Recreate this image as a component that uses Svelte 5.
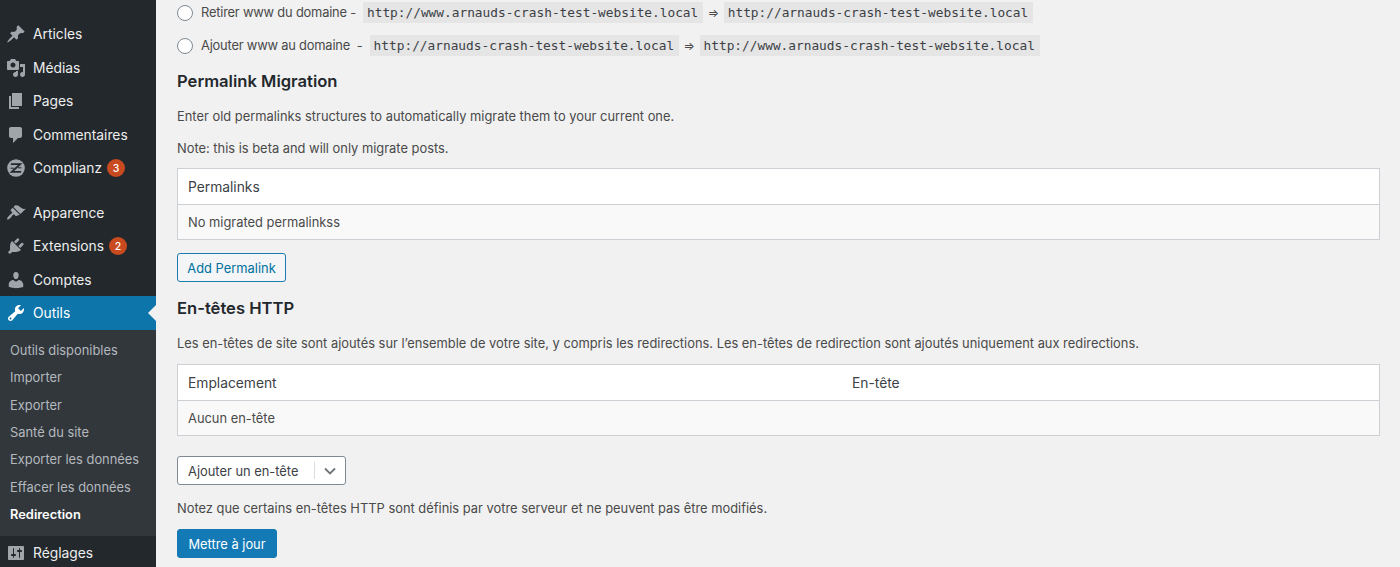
<script>
    const icons = {
        post: "M10.44 3.02l1.82-1.82 6.36 6.35-1.83 1.82c-1.05-.68-2.48-.57-3.41.36l-.75.75c-.92.93-1.04 2.35-.35 3.41l-1.83 1.82-2.41-2.41-2.8 2.79c-.42.42-3.38 2.71-3.8 2.29s1.86-3.39 2.28-3.81l2.79-2.79L4.1 9.36l1.83-1.82c1.05.69 2.48.57 3.4-.36l.75-.75c.93-.92 1.05-2.35.36-3.41z",
        media: "M13 11V4c0-.55-.45-1-1-1h-1.67L9 1H5L3.67 3H2c-.55 0-1 .45-1 1v7c0 .55.45 1 1 1h10c.55 0 1-.45 1-1zM7 4.5c1.38 0 2.5 1.12 2.5 2.5S8.38 9.5 7 9.5 4.5 8.38 4.5 7 5.62 4.5 7 4.5zM14 6h5v10.5c0 1.38-1.12 2.5-2.5 2.5S14 17.88 14 16.5s1.12-2.5 2.5-2.5c.17 0 .34.02.5.05V9h-3V6zm-4 8.05V13h2v3.5c0 1.38-1.12 2.5-2.5 2.5S7 17.88 7 16.5 8.12 14 9.5 14c.17 0 .34.02.5.05z",
        page: "M6 15V2h10v13H6zm-1 1h8v2H3V5h2v11z",
        comments: "M5 2h9c1.1 0 2 .9 2 2v7c0 1.1-.9 2-2 2h-2l-5 5v-5H5c-1.1 0-2-.9-2-2V4c0-1.1.9-2 2-2z",
        appearance: "M14.48 11.06L7.41 3.99l1.5-1.5c.5-.56 2.3-.47 3.51.32 1.21.8 1.43 1.28 2.91 2.1 1.18.64 2.45 1.26 4.45.85zm-.71.71L6.7 4.7 4.93 6.47c-.39.39-.39 1.02 0 1.41l1.06 1.06c.39.39.39 1.03 0 1.42-.6.6-1.43 1.11-2.21 1.69-.35.26-.7.53-1.01.84-1.34 1.36-1.79 2.58-1.76 3.63.8.24 2.05-.21 3.41-1.55.31-.31.58-.66.84-1.01.58-.78 1.09-1.61 1.69-2.21.39-.39 1.03-.39 1.42 0l1.06 1.06c.39.39 1.02.39 1.41 0z",
        plugins: "M13.11 4.36L9.87 7.6 8 5.73l3.24-3.24c.35-.34 1.05-.2 1.56.32.52.51.66 1.21.31 1.55zm-8 1.77l.91-1.12 9.01 9.01-1.19.84c-.71.71-2.63 1.16-3.82 1.16H6.14L4.9 17.26c-.59.59-1.54.59-2.12 0-.59-.58-.59-1.53 0-2.12l1.24-1.24v-3.88c0-1.13.4-3.19 1.09-3.89zm7.26 3.97l3.24-3.24c.34-.35 1.04-.21 1.55.31.52.51.66 1.21.31 1.55l-3.24 3.25z",
        users: "M10 9.25c-2.27 0-2.73-3.44-2.73-3.44C7 4.02 7.82 2 9.97 2c2.16 0 2.98 2.02 2.71 3.81 0 0-.41 3.44-2.68 3.44zm0 2.57L12.72 10c2.39 0 4.52 2.33 4.52 4.53v2.49s-3.65 1.13-7.24 1.13c-3.65 0-7.24-1.13-7.24-1.13v-2.49c0-2.25 1.94-4.48 4.47-4.48z",
        tools: "M16.68 9.77c-1.34 1.34-3.3 1.67-4.95.99l-5.41 6.52c-.99.99-2.59.99-3.58 0s-.99-2.59 0-3.57l6.52-5.42c-.68-1.65-.35-3.61.99-4.95 1.28-1.28 3.12-1.62 4.72-1.06l-2.89 2.89 2.82 2.82 2.86-2.87c.53 1.58.18 3.39-1.08 4.65zM3.81 16.21c.4.39 1.04.39 1.43 0 .4-.4.4-1.04 0-1.43-.39-.4-1.03-.4-1.43 0-.39.39-.39 1.03 0 1.43z",
        settings: "M18 16V4c0-.55-.45-1-1-1H3c-.55 0-1 .45-1 1v12c0 .55.45 1 1 1h14c.55 0 1-.45 1-1zM8 11h1c.55 0 1 .45 1 1s-.45 1-1 1H8v1.5c0 .28-.22.5-.5.5s-.5-.22-.5-.5V13H6c-.55 0-1-.45-1-1s.45-1 1-1h1V5.5c0-.28.22-.5.5-.5s.5.22.5.5V11zm5-2h-1c-.55 0-1-.45-1-1s.45-1 1-1h1V5.5c0-.28.22-.5.5-.5s.5.22.5.5V7h1c.55 0 1 .45 1 1s-.45 1-1 1h-1v5.5c0 .28-.22.5-.5.5s-.5-.22-.5-.5V9z"
    };

    const menuTop = [
        { label: "Articles", icon: "post" },
        { label: "Médias", icon: "media" },
        { label: "Pages", icon: "page" },
        { label: "Commentaires", icon: "comments" },
        { label: "Complianz", icon: "complianz", badge: 3 }
    ];
    const menuBottom = [
        { label: "Apparence", icon: "appearance" },
        { label: "Extensions", icon: "plugins", badge: 2 },
        { label: "Comptes", icon: "users" }
    ];
    const submenu = ["Outils disponibles", "Importer", "Exporter", "Santé du site", "Exporter les données", "Effacer les données"];
</script>

{#snippet item(m)}
    <li class="item">
        <svg class="icon" viewBox="0 0 20 20" width="20" height="20">
            {#if m.icon === "complianz"}
                <circle cx="10" cy="10" r="8.8" fill="#a0a5aa" />
                <path d="M4.8 6.2h9.4L5.8 13.8h9.4" fill="none" stroke="#23282d" stroke-width="1.8" />
                <path d="M4.5 10.2h3.5M12 9.8h3.5" stroke="#23282d" stroke-width="1" />
            {:else}
                <path d={icons[m.icon]} fill="#a0a5aa" />
            {/if}
        </svg>
        <span>{m.label}</span>
        {#if m.badge}<b class="badge">{m.badge}</b>{/if}
    </li>
{/snippet}

<div class="page">
    <aside class="sidebar">
        <ul class="menu">
            {#each menuTop as m}
                {@render item(m)}
            {/each}
        </ul>
        <ul class="menu second">
            {#each menuBottom as m}
                {@render item(m)}
            {/each}
            <li class="item active">
                <svg class="icon" viewBox="0 0 20 20" width="20" height="20"><path d={icons.tools} fill="#fff" /></svg>
                <span>Outils</span>
            </li>
        </ul>
        <ul class="submenu">
            {#each submenu as s}
                <li>{s}</li>
            {/each}
            <li class="current">Redirection</li>
        </ul>
        <ul class="menu">
            {@render item({ label: "Réglages", icon: "settings" })}
        </ul>
    </aside>

    <main class="content">
        <div class="radio-row first">
            <span class="radio"></span>
            <span class="radio-label">Retirer www du domaine -</span>
            <code>http://www.arnauds-crash-test-website.local</code>
            <span class="arrow">⇒</span>
            <code>http://arnauds-crash-test-website.local</code>
        </div>
        <div class="radio-row">
            <span class="radio"></span>
            <span class="radio-label">Ajouter www au domaine&nbsp; -</span>
            <code>http://arnauds-crash-test-website.local</code>
            <span class="arrow">⇒</span>
            <code>http://www.arnauds-crash-test-website.local</code>
        </div>

        <h2 class="title-perm">Permalink Migration</h2>
        <p class="intro">Enter old permalinks structures to automatically migrate them to your current one.</p>
        <p class="note">Note: this is beta and will only migrate posts.</p>

        <div class="table perm">
            <div class="thead"><span>Permalinks</span></div>
            <div class="tbody">No migrated permalinkss</div>
        </div>
        <button class="btn-outline">Add Permalink</button>

        <h2 class="title-http">En-têtes HTTP</h2>
        <p class="intro">Les en-têtes de site sont ajoutés sur l’ensemble de votre site, y compris les redirections. Les en-têtes de redirection sont ajoutés uniquement aux redirections.</p>

        <div class="table http">
            <div class="thead two"><span>Emplacement</span><span>En-tête</span></div>
            <div class="tbody">Aucun en-tête</div>
        </div>

        <div class="select">
            <span class="select-label">Ajouter un en-tête</span>
            <span class="select-sep"></span>
            <svg viewBox="0 0 12 8" width="12" height="8"><path d="M1 1.5l5 5 5-5" fill="none" stroke="#6f7479" stroke-width="1.8" /></svg>
        </div>
        <p class="notice">Notez que certains en-têtes HTTP sont définis par votre serveur et ne peuvent pas être modifiés.</p>
        <button class="btn-primary">Mettre à jour</button>
    </main>
</div>

<style>
    :global(html), :global(body) {
        margin: 0;
        height: 567px;
        overflow: hidden;
        background: #f1f1f1;
    }
    .page {
        display: flex;
        height: 567px;
        overflow: hidden;
        font-family: Inter, "Noto Sans", sans-serif;
        font-size: 12.88px;
        color: #4a4a4a;
    }
    ul {
        list-style: none;
        margin: 0;
        padding: 0;
    }

    .sidebar {
        width: 156px;
        flex: none;
        background: #23282d;
        padding-top: 17.4px;
        box-sizing: border-box;
    }
    .second {
        margin-top: 11px;
    }
    .item {
        display: flex;
        align-items: center;
        height: 33.5px;
        color: #eee;
        font-size: 13.8px;
        position: relative;
    }
    .icon {
        flex: none;
        margin: 0 7px 0 6px;
    }
    .badge {
        width: 18px;
        height: 18px;
        margin-left: 5px;
        border-radius: 50%;
        background: #ca4a1f;
        color: #fff;
        font-size: 10.5px;
        font-weight: 500;
        display: flex;
        align-items: center;
        justify-content: center;
    }
    .active {
        background: #0e75ab;
        color: #fff;
    }
    .active::after {
        content: "";
        position: absolute;
        right: 0;
        top: 50%;
        margin-top: -8px;
        border: 8px solid transparent;
        border-left: 0;
        border-right-color: #f1f1f1;
    }
    .submenu {
        background: #32373c;
        padding: 7px 0 9px;
        height: 206.5px;
        box-sizing: border-box;
    }
    .submenu li {
        height: 27.4px;
        line-height: 27.4px;
        padding-left: 10px;
        color: #b4b9be;
    }
    .submenu .current {
        color: #fff;
        font-weight: 600;
    }

    .content {
        flex: 1;
        min-width: 0;
        padding: 0 20px 0 21px;
    }
    .radio-row {
        display: flex;
        align-items: center;
        height: 21px;
        margin-top: 12px;
        white-space: nowrap;
    }
    .radio-row.first {
        margin-top: 2px;
    }
    .radio {
        width: 14px;
        height: 14px;
        flex: none;
        border: 1px solid #7e8993;
        border-radius: 50%;
        background: #fff;
        margin-right: 8px;
    }
    .radio-label {
        margin-right: 7px;
        letter-spacing: -0.2px;
    }
    code {
        font-family: "DejaVu Sans Mono", "Liberation Mono", monospace;
        font-size: 12.8px;
        background: #e5e5e5;
        color: #3c4146;
        padding: 0 5px 0 4px;
        height: 21px;
        line-height: 21px;
    }
    .arrow {
        margin: 0 4.5px;
        font-size: 12px;
    }
    h2 {
        font-size: 16.6px;
        font-weight: 600;
        color: #23282d;
        margin: 0;
        line-height: 22px;
    }
    .title-perm {
        margin-top: 14px;
    }
    .title-http {
        margin-top: 15px;
    }
    p {
        margin: 0;
        line-height: 18px;
    }
    .intro {
        margin-top: 16px;
    }
    .note {
        margin-top: 14px;
    }
    .table {
        border: 1px solid #ccd0d4;
        box-sizing: border-box;
    }
    .table.perm {
        margin-top: 10px;
    }
    .table.http {
        margin-top: 11px;
    }
    .thead {
        display: flex;
        align-items: center;
        height: 35px;
        padding-left: 10px;
        background: #fff;
        border-bottom: 1px solid #ccd0d4;
        font-size: 13.8px;
        color: #3c4146;
    }
    .thead.two span:first-child {
        width: 664px;
    }
    .tbody {
        height: 34px;
        line-height: 36px;
        padding-left: 10px;
        background: #f9f9f9;
    }
    button {
        display: block;
        font-family: inherit;
        font-size: 12.88px;
        border-radius: 3px;
        box-sizing: border-box;
        padding: 2px 0 0;
    }
    .btn-outline {
        width: 109px;
        height: 29px;
        margin-top: 13px;
        border: 1px solid #1a7bae;
        background: #f3f5f6;
        color: #0071a1;
    }
    .select {
        display: flex;
        align-items: center;
        width: 169px;
        height: 29px;
        margin-top: 20px;
        box-sizing: border-box;
        border: 1px solid #7e8993;
        border-radius: 3px;
        background: #fff;
        color: #3c4146;
        padding-left: 10px;
    }
    .select-label {
        width: 126px;
        flex: none;
        padding-top: 2px;
    }
    .select-sep {
        width: 1px;
        height: 17px;
        background: #ddd;
        margin-right: 9px;
    }
    .notice {
        margin-top: 15px;
    }
    .btn-primary {
        width: 100px;
        height: 29px;
        margin-top: 11px;
        border: 1px solid #137ab5;
        background: #137ab5;
        color: #fff;
    }
</style>
